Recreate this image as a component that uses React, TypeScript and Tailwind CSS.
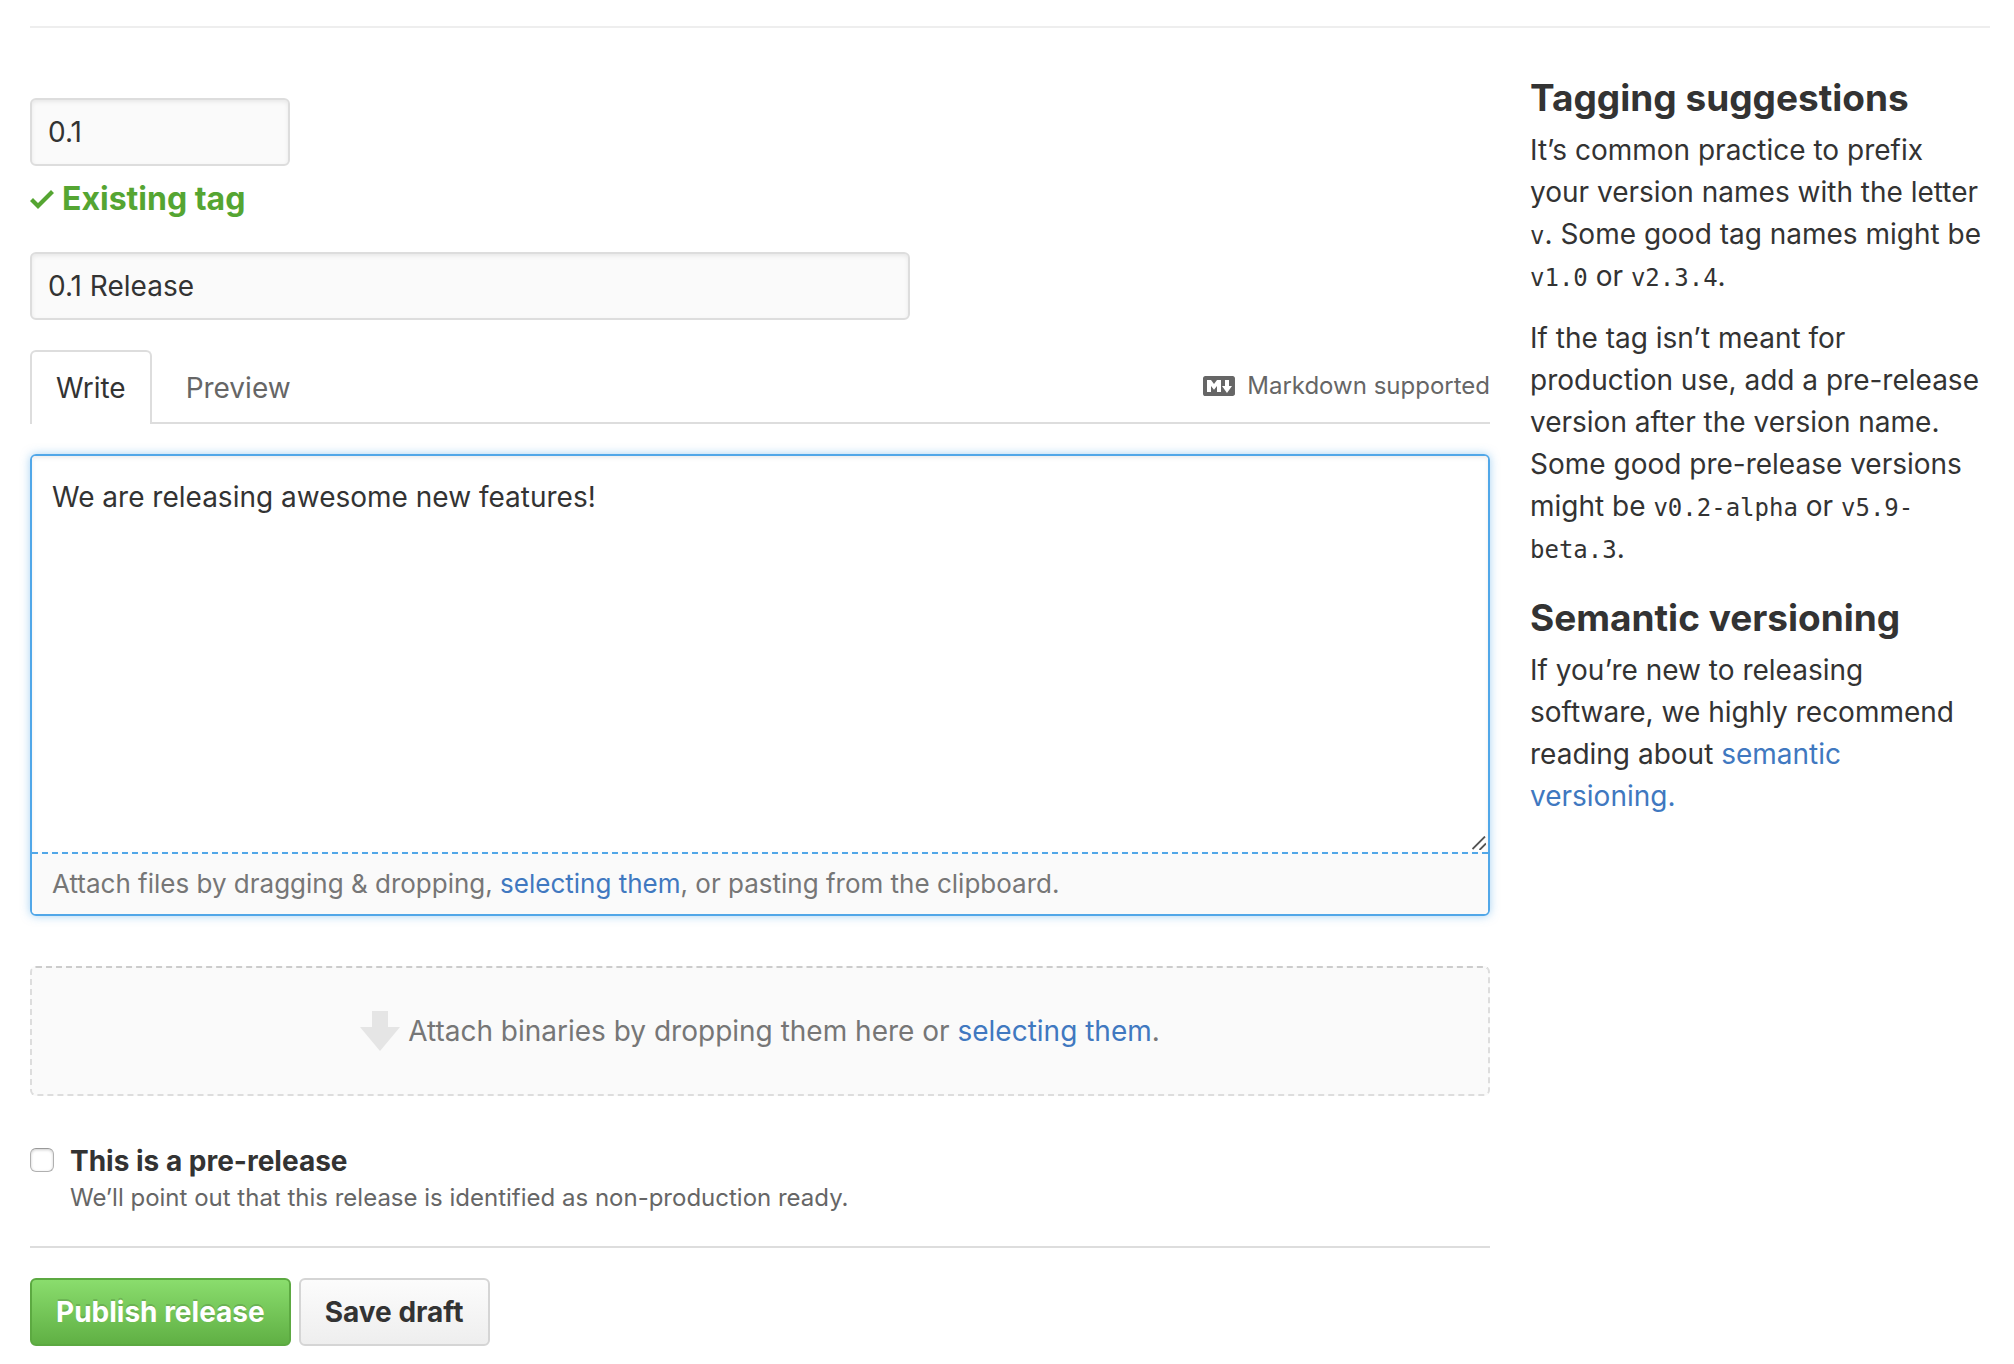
import type { ReactNode } from "react";

function CheckIcon() {
  return (
    <svg width="24" height="22" viewBox="0 2.5 12 11" fill="#55a532" aria-hidden="true">
      <path d="M12 5l-8 8-4-4 1.500-1.500L4 10l6.500-6.500z" />
    </svg>
  );
}

function MarkdownIcon() {
  return (
    <svg width="32" height="20" viewBox="0 3 16 10" fill="#666" aria-hidden="true">
      <path
        fillRule="evenodd"
        d="M14.850 3H1.150C.520 3 0 3.520 0 4.150v7.690C0 12.480.520 13 1.150 13h13.690c.640 0 1.150-.520 1.150-1.150v-7.700C16 3.520 15.480 3 14.850 3zM9 11H7V8L5.500 9.920 4 8v3H2V5h2l1.500 2L7 5h2v6zm2.990.500L9.500 8H11V5h2v3h1.500l-2.510 3.500z"
      />
    </svg>
  );
}

function ArrowDownIcon() {
  return (
    <svg width="40" height="40" viewBox="0 0 40 40" fill="#e5e5e5" aria-hidden="true">
      <path d="M12 0h16v16h12L20 40 0 16h12z" />
    </svg>
  );
}

function Code({ children }: { children: ReactNode }) {
  return <code className="font-['DejaVu_Sans_Mono',monospace] text-2xl leading-none">{children}</code>;
}

const inputClass =
  "block h-17 rounded-md border-2 border-[#ddd] bg-[#fafafa] px-4 text-[28px] text-[#333] shadow-[inset_0_2px_4px_rgba(0,0,0,0.075)] outline-none";

export default function App() {
  return (
    <div className="bg-white pt-[26px] pr-6 pb-4 pl-[30px] font-['Inter',sans-serif] text-[28px] leading-[42px] text-[#333]">
      <div className="flex items-start gap-10 border-t-2 border-[#eee]">
        <form className="min-w-0 flex-1 pt-[70px]" onSubmit={(e) => e.preventDefault()}>
          <input aria-label="Tag version" className={`${inputClass} w-65`} defaultValue="0.1" />
          <div className="mt-3 flex h-[42px] items-center gap-2 text-[32px] font-bold text-[#55a532]">
            <CheckIcon />
            <span>Existing tag</span>
          </div>

          <input
            aria-label="Release title"
            className={`${inputClass} mt-8 w-220 max-w-full`}
            defaultValue="0.1 Release"
          />

          <div className="mt-[30px] flex h-[74px] items-stretch border-b-2 border-[#ddd]">
            <button
              type="button"
              className="-mb-0.5 rounded-t-md border-2 border-b-0 border-[#ddd] bg-white px-6 text-[#333]"
            >
              Write
            </button>
            <button type="button" className="px-[34px] pt-1 text-[#666]">
              Preview
            </button>
            <a href="#markdown" className="ml-auto flex items-center gap-3 text-2xl text-[#666]">
              <MarkdownIcon />
              Markdown supported
            </a>
          </div>

          <div className="mt-[30px] overflow-hidden rounded-md border-2 border-[#51a7e8] shadow-[0_0_10px_rgba(81,167,232,0.5)]">
            <div className="relative">
              <textarea
                aria-label="Release description"
                className="block h-[396px] w-full resize-y bg-white px-5 py-5 text-[28px] leading-[42px] text-[#333] shadow-[inset_0_2px_4px_rgba(0,0,0,0.075)] outline-none [&::-webkit-resizer]:hidden"
                defaultValue="We are releasing awesome new features!"
              />
              <svg
                className="pointer-events-none absolute right-0.5 bottom-0.5"
                width="14"
                height="14"
                viewBox="0 0 14 14"
                stroke="#555"
                strokeWidth="1.800"
                aria-hidden="true"
              >
                <path d="M0.500 13 13 0.500M7.500 14 14 7.500" />
              </svg>
            </div>
            <p className="border-t-2 border-dashed border-[#51a7e8] bg-[#fafafa] px-5 py-[9px] text-[26px] text-[#767676]">
              Attach files by dragging &amp; dropping,{" "}
              <a href="#files" className="text-[#4078c0]">
                selecting them
              </a>
              , or pasting from the clipboard.
            </p>
          </div>

          <div className="mt-[50px] flex h-[130px] items-center justify-center gap-2 rounded-md border-2 border-dashed border-[#ddd] border-t-[#ccc] bg-[#fafafa] text-[#767676]">
            <ArrowDownIcon />
            <p>
              Attach binaries by dropping them here or{" "}
              <a href="#binaries" className="text-[#4078c0]">
                selecting them
              </a>
              .
            </p>
          </div>

          <div className="mt-[45px] flex items-start gap-4 border-b-2 border-[#ddd] pb-[31px]">
            <input
              id="prerelease"
              type="checkbox"
              aria-describedby="prerelease-note"
              className="mt-[7px] size-6 shrink-0 appearance-none rounded-md border border-[#b0b0b0] border-t-[#999] bg-white shadow-[inset_0_1px_3px_rgba(0,0,0,0.2)] checked:bg-[#4078c0]"
            />
            <div>
              <label htmlFor="prerelease" className="block leading-10 font-bold">
                This is a pre-release
              </label>
              <p id="prerelease-note" className="text-2xl leading-[34px] text-[#666]">
                We’ll point out that this release is identified as non-production ready.
              </p>
            </div>
          </div>

          <div className="mt-[30px] flex gap-2">
            <button
              type="submit"
              className="h-17 rounded-md border-2 border-[#5ca941] bg-linear-to-b from-[#8add6d] to-[#60b044] px-6 font-bold text-white text-shadow-[0_-2px_0_rgba(0,0,0,0.15)]"
            >
              Publish release
            </button>
            <button
              type="button"
              className="h-17 rounded-md border-2 border-[#d5d5d5] bg-linear-to-b from-[#fcfcfc] to-[#eee] px-6 font-bold text-[#333]"
            >
              Save draft
            </button>
          </div>
        </form>

        <aside className="w-[460px] shrink-0 pt-12 pr-1">
          <h2 className="text-[37px] leading-11 font-bold">Tagging suggestions</h2>
          <p className="mt-[9px]">
            It’s common practice to prefix your version names with the letter <Code>v</Code>. Some good tag names
            might be <Code>v1.0</Code> or <Code>v2.3.4</Code>.
          </p>
          <p className="mt-5">
            If the tag isn’t meant for production use, add a pre-release version after the version name. Some good
            pre-release versions might be <Code>v0.2-alpha</Code> or <Code>v5.9-beta.3</Code>.
          </p>
          <h2 className="mt-[27px] text-[37px] leading-11 font-bold">Semantic versioning</h2>
          <p className="mt-[9px]">
            If you’re new to releasing software, we highly recommend reading about{" "}
            <a href="#semver" className="text-[#4078c0]">
              semantic versioning.
            </a>
          </p>
        </aside>
      </div>
    </div>
  );
}
